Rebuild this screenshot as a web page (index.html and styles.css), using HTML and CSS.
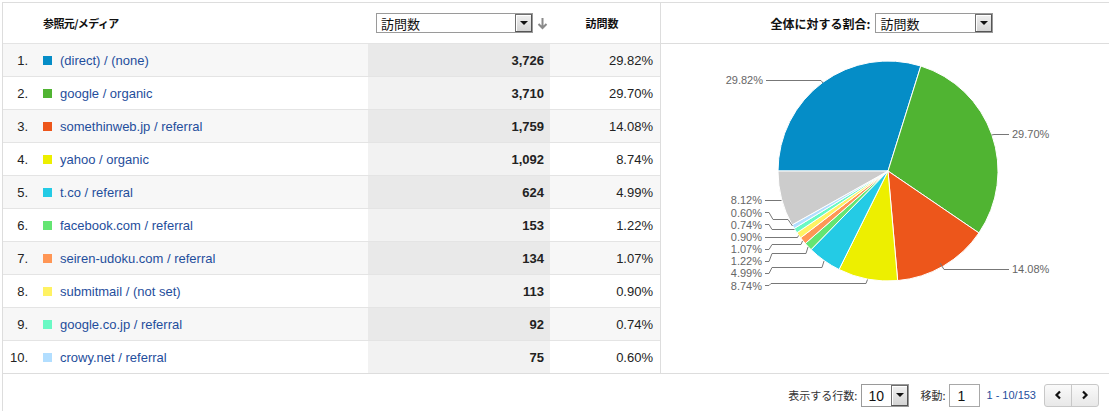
FILE: index.html
```html
<!DOCTYPE html>
<html lang="ja">
<head>
<meta charset="utf-8">
<title>参照元/メディア</title>
<link rel="stylesheet" href="styles.css">
</head>
<body>
<div class="report">
  <div class="main">
    <div class="table">
      <div class="row head">
        <div class="cell c-idx"></div>
        <div class="cell c-name"><span class="h-title">参照元/メディア</span></div>
        <div class="cell c-visits head-visits">
          <div class="select wide"><span class="sel-text">訪問数</span><span class="sel-btn"><span class="tri"></span></span></div>
          <svg class="sort" width="11" height="13" viewBox="0 0 11 13"><path d="M5.5 1 V11 M1.5 7 L5.5 11 L9.5 7" fill="none" stroke="#8a8a8a" stroke-width="2"/></svg>
        </div>
        <div class="cell c-pct head-pct"><span class="h-title">訪問数</span></div>
      </div>

      <div class="row odd"><div class="cell c-idx">1.</div><div class="cell c-name"><i class="sq" style="background:#058dc7"></i><a>(direct) / (none)</a></div><div class="cell c-visits">3,726</div><div class="cell c-pct">29.82%</div></div>
      <div class="row"><div class="cell c-idx">2.</div><div class="cell c-name"><i class="sq" style="background:#50b432"></i><a>google / organic</a></div><div class="cell c-visits">3,710</div><div class="cell c-pct">29.70%</div></div>
      <div class="row odd"><div class="cell c-idx">3.</div><div class="cell c-name"><i class="sq" style="background:#ed561b"></i><a>somethinweb.jp / referral</a></div><div class="cell c-visits">1,759</div><div class="cell c-pct">14.08%</div></div>
      <div class="row"><div class="cell c-idx">4.</div><div class="cell c-name"><i class="sq" style="background:#edef00"></i><a>yahoo / organic</a></div><div class="cell c-visits">1,092</div><div class="cell c-pct">8.74%</div></div>
      <div class="row odd"><div class="cell c-idx">5.</div><div class="cell c-name"><i class="sq" style="background:#24cbe5"></i><a>t.co / referral</a></div><div class="cell c-visits">624</div><div class="cell c-pct">4.99%</div></div>
      <div class="row"><div class="cell c-idx">6.</div><div class="cell c-name"><i class="sq" style="background:#64e572"></i><a>facebook.com / referral</a></div><div class="cell c-visits">153</div><div class="cell c-pct">1.22%</div></div>
      <div class="row odd"><div class="cell c-idx">7.</div><div class="cell c-name"><i class="sq" style="background:#ff9655"></i><a>seiren-udoku.com / referral</a></div><div class="cell c-visits">134</div><div class="cell c-pct">1.07%</div></div>
      <div class="row"><div class="cell c-idx">8.</div><div class="cell c-name"><i class="sq" style="background:#fff263"></i><a>submitmail / (not set)</a></div><div class="cell c-visits">113</div><div class="cell c-pct">0.90%</div></div>
      <div class="row odd"><div class="cell c-idx">9.</div><div class="cell c-name"><i class="sq" style="background:#6af9c4"></i><a>google.co.jp / referral</a></div><div class="cell c-visits">92</div><div class="cell c-pct">0.74%</div></div>
      <div class="row last"><div class="cell c-idx">10.</div><div class="cell c-name"><i class="sq" style="background:#b2deff"></i><a>crowy.net / referral</a></div><div class="cell c-visits">75</div><div class="cell c-pct">0.60%</div></div>
    </div>

    <div class="chart">
      <div class="chart-head">
        <span class="h-title">全体に対する割合:</span>
        <div class="select mid"><span class="sel-text">訪問数</span><span class="sel-btn"><span class="tri"></span></span></div>
      </div>
      <svg class="pie" width="448" height="329" viewBox="661 44 448 329">
        <g stroke="#ffffff" stroke-width="1" stroke-linejoin="round">
          <path fill="#058dc7" d="M888,171 L778,171 A110,110 0 0 1 920.80,66.00 Z"/>
          <path fill="#50b432" d="M888,171 L920.80,66.00 A110,110 0 0 1 978.92,232.94 Z"/>
          <path fill="#ed561b" d="M888,171 L978.92,232.94 A110,110 0 0 1 897.67,280.58 Z"/>
          <path fill="#edef00" d="M888,171 L897.67,280.58 A110,110 0 0 1 839.05,269.51 Z"/>
          <path fill="#24cbe5" d="M888,171 L839.05,269.51 A110,110 0 0 1 811.07,249.62 Z"/>
          <path fill="#64e572" d="M888,171 L811.07,249.62 A110,110 0 0 1 805.27,243.50 Z"/>
          <path fill="#ff9655" d="M888,171 L805.27,243.50 A110,110 0 0 1 800.62,237.81 Z"/>
          <path fill="#fff263" d="M888,171 L800.62,237.81 A110,110 0 0 1 796.95,232.74 Z"/>
          <path fill="#6af9c4" d="M888,171 L796.95,232.74 A110,110 0 0 1 794.19,228.45 Z"/>
          <path fill="#b2deff" d="M888,171 L794.19,228.45 A110,110 0 0 1 792.09,224.87 Z"/>
          <path fill="#cccccc" d="M888,171 L792.09,224.87 A110,110 0 0 1 778,171 Z"/>
        </g>
        <g fill="none" stroke="#777777" stroke-width="1">
          <path d="M766,80.5 H821 L823,83"/>
          <path d="M991.5,135 L994,134.5 H1009"/>
          <path d="M940,263 L944,269.5 H1009"/>
          <path d="M765,200.5 H781.5"/>
          <path d="M765,212.5 H769 L773,219.5 H788 L792.5,226"/>
          <path d="M765,224.5 H769 L772,229.5 H794.5"/>
          <path d="M765,237.5 H797.5 L798.5,235.5"/>
          <path d="M765,249.5 H769 L772,244.5 H801 L802.5,241"/>
          <path d="M765,261.5 H769 L772,253.5 H806 L808,247"/>
          <path d="M765,273.5 H769 L772,267.5 H822 L824,261"/>
          <path d="M765,285.5 H769 L771,283.5 H866 L867.5,279.5"/>
        </g>
        <g class="lbl" font-family="Liberation Sans, Arial, sans-serif" font-size="11" fill="#666666">
          <text x="763" y="84" text-anchor="end">29.82%</text>
          <text x="1012" y="138">29.70%</text>
          <text x="1012" y="273">14.08%</text>
          <text x="762" y="204" text-anchor="end">8.12%</text>
          <text x="762" y="216.5" text-anchor="end">0.60%</text>
          <text x="762" y="228.5" text-anchor="end">0.74%</text>
          <text x="762" y="241" text-anchor="end">0.90%</text>
          <text x="762" y="253" text-anchor="end">1.07%</text>
          <text x="762" y="265" text-anchor="end">1.22%</text>
          <text x="762" y="277" text-anchor="end">4.99%</text>
          <text x="762" y="289.5" text-anchor="end">8.74%</text>
        </g>
      </svg>
    </div>
  </div>

  <div class="footer">
    <span class="f-label">表示する行数:</span>
    <div class="select small"><span class="sel-text">10</span><span class="sel-btn"><span class="tri"></span></span></div>
    <span class="f-label goto">移動:</span>
    <div class="input"><span>1</span></div>
    <span class="range">1 - 10/153</span>
    <div class="pager">
      <span class="pg-btn"><svg width="8" height="10" viewBox="0 0 8 10"><path d="M6 1.5 L2.5 5 L6 8.5" fill="none" stroke="#111" stroke-width="2.2"/></svg></span>
      <span class="pg-btn"><svg width="8" height="10" viewBox="0 0 8 10"><path d="M2 1.5 L5.5 5 L2 8.5" fill="none" stroke="#111" stroke-width="2.2"/></svg></span>
    </div>
  </div>
</div>
</body>
</html>
```

FILE: styles.css
```css
html, body {
  margin: 0;
  padding: 0;
  background: #ffffff;
}

body {
  font-family: "Liberation Sans", Arial, "Noto Sans CJK JP", sans-serif;
  font-size: 13px;
  color: #222222;
}

.report {
  margin: 2px 0 0 2px;
  border-left: 1px solid #dddddd;
  border-top: 1px solid #dddddd;
  height: 408px;
}

.main {
  display: flex;
  border-bottom: 1px solid #dddddd;
}

.table {
  width: 657px;
  border-right: 1px solid #dddddd;
}

.row {
  display: grid;
  grid-template-columns: 33px 332px 182px 110px;
  height: 32px;
  border-bottom: 1px solid #e4e4e4;
  background: #ffffff;
}

.row.last {
  border-bottom: none;
  height: 32px;
}

.row.head {
  height: 40px;
}

.cell {
  display: flex;
  align-items: center;
  white-space: nowrap;
}

.c-idx {
  justify-content: flex-end;
  padding-right: 8px;
  color: #222222;
}

.c-name {
  padding-left: 7px;
}

.c-visits {
  justify-content: flex-end;
  padding-right: 6px;
  font-weight: bold;
  background: #f2f2f2;
}

.c-pct {
  justify-content: flex-end;
  padding-right: 7px;
  color: #222222;
}

.row.odd {
  background: #f7f7f7;
}

.row.odd .c-visits {
  background: #e9e9e9;
}

.row.head .c-visits {
  background: #ffffff;
  justify-content: flex-start;
  padding-left: 8px;
  padding-right: 0;
  font-weight: normal;
}

.row.head .c-pct {
  justify-content: center;
  padding-right: 6px;
}

.h-title {
  font-family: "Noto Sans CJK JP", sans-serif;
  font-weight: bold;
  font-size: 11px;
  color: #111111;
}

.row.head .c-name .h-title {
  letter-spacing: -0.6px;
}

.sq {
  display: inline-block;
  width: 9px;
  height: 9px;
  margin-right: 8px;
}

.c-name a {
  color: #1f4e9c;
  text-decoration: none;
}

/* select boxes */
.select {
  box-sizing: border-box;
  display: flex;
  align-items: stretch;
  border: 1px solid #9a9a9a;
  background: #ffffff;
}

.select.wide {
  width: 157px;
  height: 20px;
}

.select.mid {
  width: 118px;
  height: 20px;
  margin-left: 5px;
}

.select.small {
  width: 48px;
  height: 23px;
}

.sel-text {
  flex: 1;
  display: flex;
  align-items: center;
  padding-left: 4px;
  font-family: "Noto Sans CJK JP", sans-serif;
  font-size: 13px;
  color: #111111;
}

.select.small .sel-text {
  font-family: "Liberation Sans", Arial, sans-serif;
  font-size: 14px;
  padding-left: 6px;
  padding-top: 2px;
}

.sel-btn {
  box-sizing: border-box;
  width: 17px;
  display: flex;
  align-items: center;
  justify-content: center;
  border: 1px solid #6f6f6f;
  border-right-color: #555555;
  border-bottom-color: #555555;
  background: linear-gradient(#f0f0f0, #d4d4d4);
  box-shadow: inset 1px 1px 0 #ffffff;
}

.tri {
  width: 0;
  height: 0;
  border-left: 4px solid transparent;
  border-right: 4px solid transparent;
  border-top: 4px solid #111111;
}

.sort {
  margin-left: 4px;
  margin-top: 1px;
}

/* chart */
.chart {
  flex: 1;
  display: flex;
  flex-direction: column;
}

.chart-head {
  height: 40px;
  border-bottom: 1px solid #dddddd;
  display: flex;
  align-items: center;
  justify-content: center;
  padding-left: 0;
  padding-right: 6px;
}

.chart-head .h-title {
  font-size: 12px;
}

.pie {
  display: block;
}

/* footer */
.footer {
  display: flex;
  align-items: center;
  justify-content: flex-end;
  padding: 9px 10px 0 0;
  height: 24px;
  font-size: 11px;
  color: #333333;
}

.f-label {
  font-family: "Noto Sans CJK JP", sans-serif;
  font-size: 11px;
  margin-right: 4px;
}

.f-label.goto {
  margin-left: 11px;
}

.input {
  box-sizing: border-box;
  width: 31px;
  height: 23px;
  border: 1px solid #a8a8a8;
  display: flex;
  align-items: center;
  padding-left: 7px;
  padding-top: 2px;
  font-size: 14px;
  color: #111111;
}

.range {
  margin-left: 6px;
  color: #1f4e9c;
  font-size: 11px;
}

.pager {
  display: flex;
  margin-left: 8px;
  border: 1px solid #c8c8c8;
  border-radius: 3px;
  height: 21px;
  background: linear-gradient(#fafafa, #e8e8e8);
}

.pg-btn {
  width: 26px;
  display: flex;
  align-items: center;
  justify-content: center;
}

.pg-btn + .pg-btn {
  border-left: 1px solid #c8c8c8;
}
```
